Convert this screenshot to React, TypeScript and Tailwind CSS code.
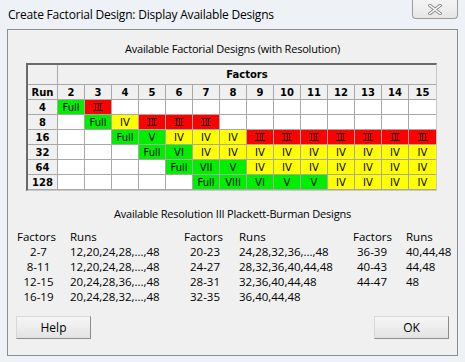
import React from "react";

const factors = [2, 3, 4, 5, 6, 7, 8, 9, 10, 11, 12, 13, 14, 15];

const designRows: { run: number; cells: string[] }[] = [
  { run: 4, cells: ["Full", "III", "", "", "", "", "", "", "", "", "", "", "", ""] },
  { run: 8, cells: ["", "Full", "IV", "III", "III", "III", "", "", "", "", "", "", "", ""] },
  { run: 16, cells: ["", "", "Full", "V", "IV", "IV", "IV", "III", "III", "III", "III", "III", "III", "III"] },
  { run: 32, cells: ["", "", "", "Full", "VI", "IV", "IV", "IV", "IV", "IV", "IV", "IV", "IV", "IV"] },
  { run: 64, cells: ["", "", "", "", "Full", "VII", "V", "IV", "IV", "IV", "IV", "IV", "IV", "IV"] },
  { run: 128, cells: ["", "", "", "", "", "Full", "VIII", "VI", "V", "V", "IV", "IV", "IV", "IV"] },
];

const pbRows = [
  ["2-7", "12,20,24,28,...,48", "20-23", "24,28,32,36,...,48", "36-39", "40,44,48"],
  ["8-11", "12,20,24,28,...,48", "24-27", "28,32,36,40,44,48", "40-43", "44,48"],
  ["12-15", "20,24,28,36,...,48", "28-31", "32,36,40,44,48", "44-47", "48"],
  ["16-19", "20,24,28,32,...,48", "32-35", "36,40,44,48", "", ""],
];

function cellClass(v: string) {
  if (v === "") return "bg-white";
  if (v === "III") return "bg-[#ff0000] text-[#3a0000]";
  if (v === "IV") return "bg-[#ffff00]";
  return "bg-[#00ee00]";
}

// Roman three drawn the way the old UI font does: three strokes between two bars
function RomanThree() {
  return (
    <span className="inline-flex h-[8px] w-[10px] border-y border-[#3a0000] justify-between px-[2px]">
      <span className="w-px bg-[#3a0000]" />
      <span className="w-px bg-[#3a0000]" />
      <span className="w-px bg-[#3a0000]" />
    </span>
  );
}

function Cell({ v, last }: { v: string; last: boolean }) {
  return (
    <div
      className={`w-[27px] h-[15px] flex items-center justify-center border-b border-[#a8a8a8] ${
        last ? "" : "border-r"
      } ${cellClass(v)}`}
    >
      {v === "III" ? <RomanThree /> : v}
    </div>
  );
}

function CloseGlyph() {
  return (
    <svg width="14" height="11" viewBox="0 0 14 11">
      <path d="M2 1.5 L12 9.5 M12 1.5 L2 9.5" stroke="#8a8a8a" strokeWidth="3.4" strokeLinecap="square" />
      <path d="M2 1.5 L12 9.5 M12 1.5 L2 9.5" stroke="#ffffff" strokeWidth="1.6" strokeLinecap="square" />
    </svg>
  );
}

function WinButton({ label }: { label: string }) {
  return (
    <button className="w-[75px] h-[23px] bg-gradient-to-b from-[#f6f6f6] to-[#e3e3e3] border border-t-[#d8d8d8] border-l-[#d8d8d8] border-r-[#8c8c8c] border-b-[#8c8c8c] text-[12px] text-black">
      {label}
    </button>
  );
}

export default function App() {
  return (
    <div className="w-[465px] h-[362px] bg-[#eef1f5] relative overflow-hidden font-['Open_Sans',sans-serif] text-black">
      {/* Title bar */}
      <div className="h-[29px] flex items-center pl-[8px] text-[12px] tracking-[-0.2px]">
        Create Factorial Design: Display Available Designs
      </div>
      <div className="absolute top-0 right-[7px] w-[46px] h-[19px] rounded-b-[4px] border border-t-0 border-[#9a9a9a] bg-gradient-to-b from-[#f4f4f4] to-[#e6e6e6] flex items-center justify-center">
        <CloseGlyph />
      </div>

      {/* Client area */}
      <div className="mx-[7px] h-[327px] border border-[#8d8d8d] bg-[#f0f0f0] flex flex-col">
        <div className="mt-[12px] h-[14px] leading-[14px] text-[11px] tracking-[-0.2px] text-center">
          Available Factorial Designs (with Resolution)
        </div>

        {/* Designs table */}
        <div className="mt-[7px] ml-[18px] self-start border-t-2 border-l-2 border-[#6a6a6a] border-r border-b border-r-[#c8c8c8] border-b-[#c8c8c8] font-['DejaVu_Sans',sans-serif] text-[10px]">
          <div className="flex h-[20px] border-b border-[#a8a8a8]">
            <div className="w-[30px] border-r border-[#a8a8a8]" />
            <div className="w-[378px] flex items-center justify-center font-bold">Factors</div>
          </div>
          <div className="flex font-bold">
            <div className="w-[30px] h-[15px] flex items-center justify-center border-r border-b border-[#a8a8a8]">Run</div>
            {factors.map((f, i) => (
              <div
                key={f}
                className={`w-[27px] h-[15px] flex items-center justify-center border-b border-[#a8a8a8] ${
                  i === factors.length - 1 ? "" : "border-r"
                }`}
              >
                {f}
              </div>
            ))}
          </div>
          {designRows.map((row) => (
            <div key={row.run} className="flex">
              <div className="w-[30px] h-[15px] flex items-center justify-center border-r border-b border-[#a8a8a8] font-bold">
                {row.run}
              </div>
              {row.cells.map((v, i) => (
                <Cell key={i} v={v} last={i === row.cells.length - 1} />
              ))}
            </div>
          ))}
        </div>

        <div className="mt-[16px] h-[14px] leading-[14px] text-[11px] tracking-[-0.2px] text-center">
          Available Resolution III Plackett-Burman Designs
        </div>

        {/* Plackett-Burman list */}
        <div className="mt-[8px] ml-[9px] text-[11.5px] leading-[15px]">
          <div className="flex h-[15px]">
            <div className="w-[53px]">Factors</div>
            <div className="w-[114px]">Runs</div>
            <div className="w-[55px]">Factors</div>
            <div className="w-[114px]">Runs</div>
            <div className="w-[53px]">Factors</div>
            <div>Runs</div>
          </div>
          {pbRows.map((r, i) => (
            <div key={i} className="flex h-[15px]">
              <div className="w-[53px]">
                <div className="w-[43px] text-center">{r[0]}</div>
              </div>
              <div className="w-[114px]">{r[1]}</div>
              <div className="w-[55px]">
                <div className="w-[36px] text-right">{r[2]}</div>
              </div>
              <div className="w-[114px]">{r[3]}</div>
              <div className="w-[53px]">
                <div className="w-[34px] text-right">{r[4]}</div>
              </div>
              <div>{r[5]}</div>
            </div>
          ))}
        </div>

        <div className="mt-[12px] mx-[8px] flex justify-between">
          <WinButton label="Help" />
          <WinButton label="OK" />
        </div>
      </div>
    </div>
  );
}
